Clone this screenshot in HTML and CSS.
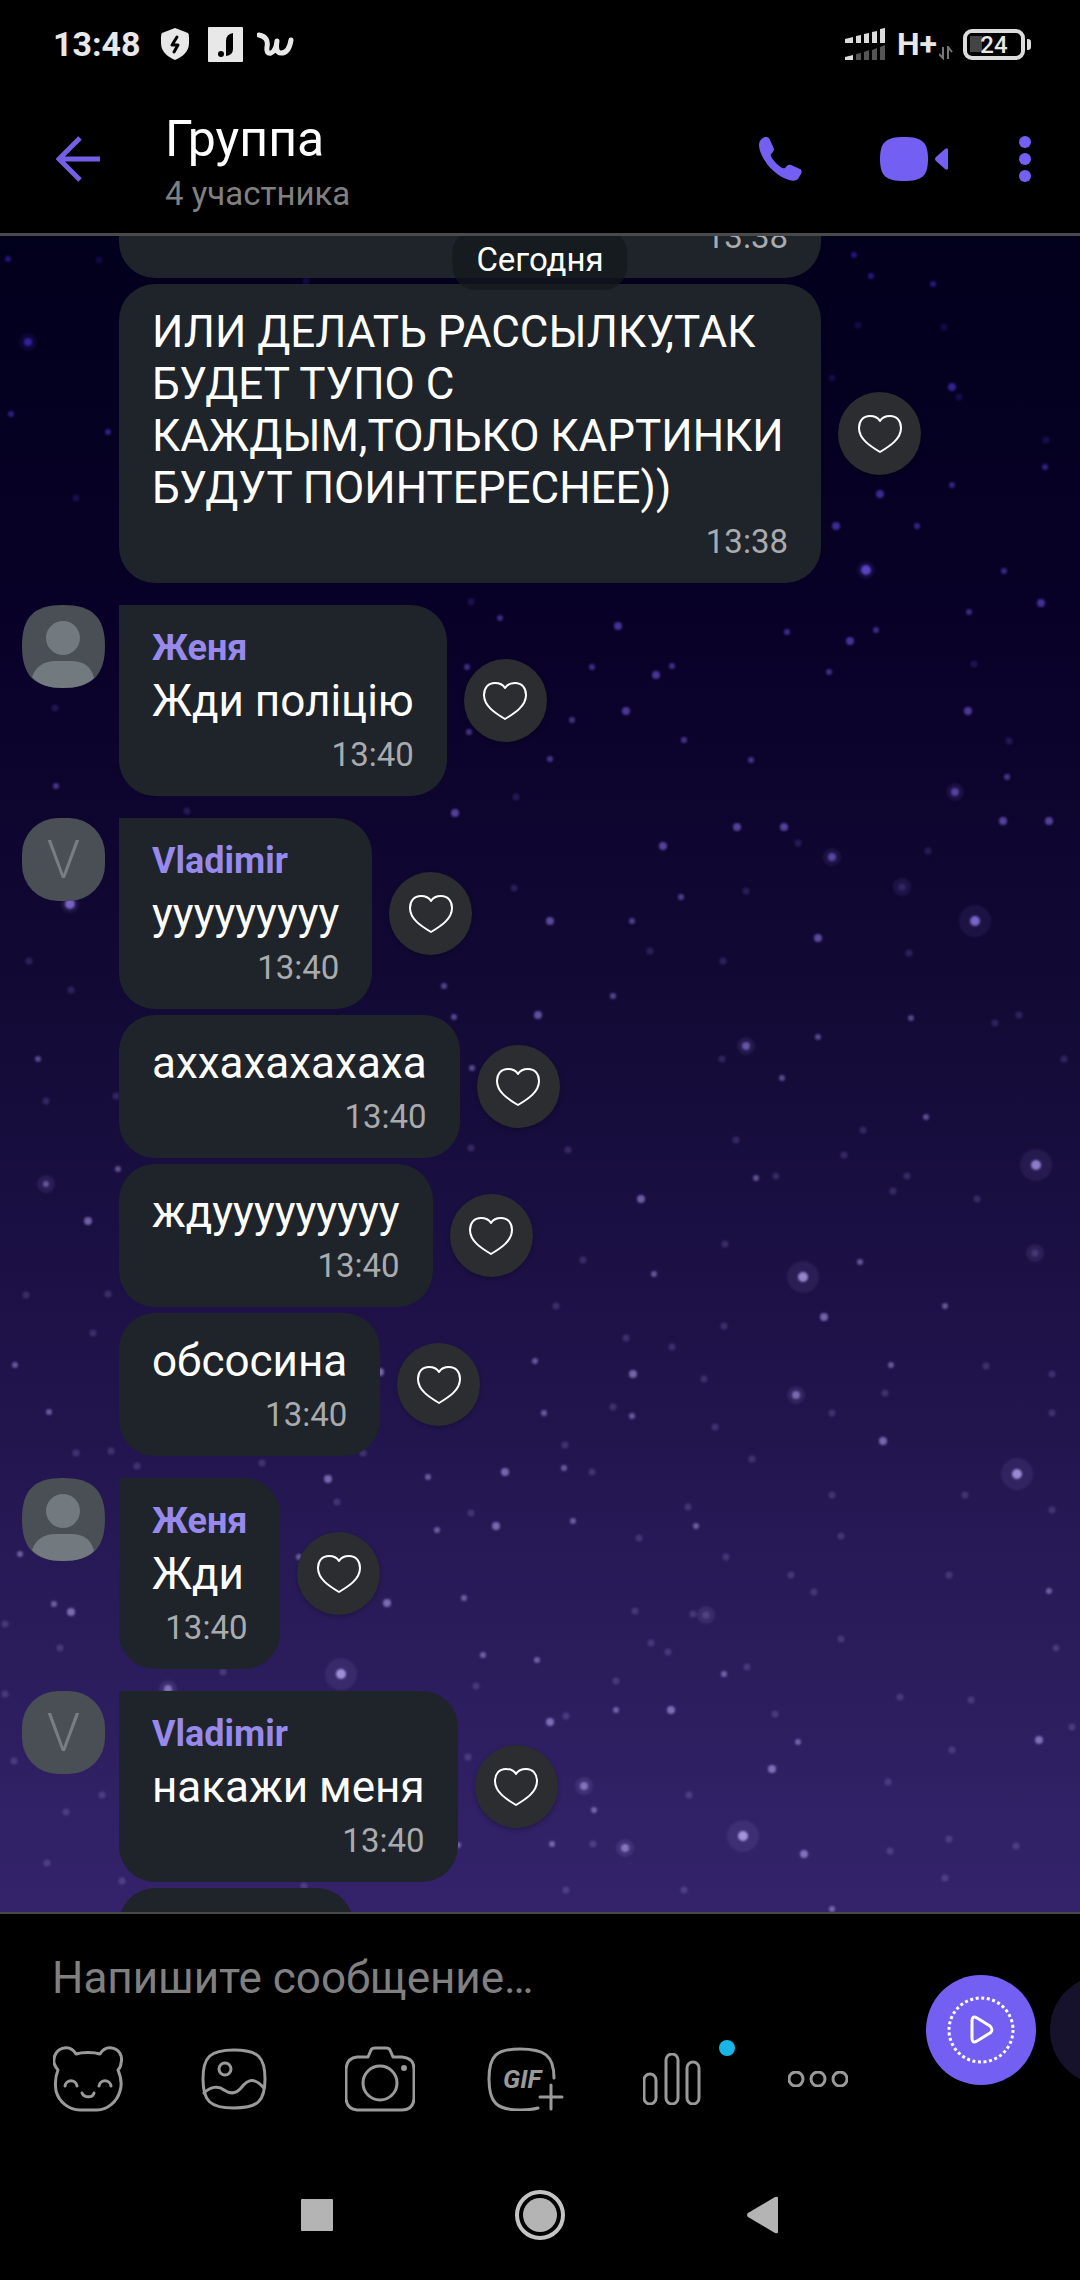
FILE: index.html
```html
<!DOCTYPE html>
<html lang="ru">
<head>
  <meta charset="UTF-8" />
  <meta name="viewport" content="width=device-width, initial-scale=1.0"/>
  <title>Группа</title>
  <link rel="stylesheet" href="styles.css">
</head>
<body>

  <!-- Общие иконки -->
  <svg class="sprite" aria-hidden="true">
    <symbol id="heart" viewBox="0 0 46 40">
      <path d="M23 7C20 2 16 2 13 2C6 2 2 7 2 14C2 25 13 32 23 38C33 32 44 25 44 14C44 7 40 2 33 2C30 2 26 2 23 7Z" fill="none" stroke="#fff" stroke-width="2" stroke-linejoin="round"/>
    </symbol>
    <symbol id="person" viewBox="0 0 83 83">
      <path d="M41 0C70 0 83 12 83 41C83 70 70 83 41 83C12 83 0 70 0 41C0 12 12 0 41 0Z" fill="#4a4e55"/>
      <circle cx="41" cy="33" r="17" fill="#727a7f"/>
      <path d="M10 72C14 61 22 56 34 56H49C61 56 69 61 72 73C65 80 54 83 41 83C28 83 17 80 10 72Z" fill="#727a7f"/>
    </symbol>
  </svg>

  <div class="status">
    <span class="clock">13:48</span>
    <svg class="shield" width="28" height="32" viewBox="0 0 28 32">
      <path d="M14 0L27 5Q28 6 28 9V15C28 24 21 29 14 32C7 29 0 24 0 15V9Q0 6 1 5Z" fill="#e8e8e8"/>
      <path d="M16 9L11 17H17L13 24" fill="none" stroke="#000" stroke-width="3" stroke-linejoin="round" stroke-linecap="round"/>
    </svg>
    <svg class="joom" width="35" height="35" viewBox="0 0 35 35">
      <rect width="35" height="35" rx="1" fill="#e8e8e8"/>
      <circle cx="13" cy="27" r="3" fill="#000"/>
      <path d="M18 29V14Q18 7 25 6V22Q25 28 18 29Z" fill="#000"/>
    </svg>
    <svg class="wish" width="37" height="26" viewBox="0 0 37 26">
      <path d="M2 4Q7 5 9 8Q11 11 10 16Q9 23 14 22Q19 20 20 10Q18 22 24 22Q32 22 34 9" fill="none" stroke="#e8e8e8" stroke-width="5" stroke-linecap="round" stroke-linejoin="round"/>
    </svg>

    <svg class="signal" width="40" height="32" viewBox="0 0 40 32">
      <path d="M0 11L8 9V15H0ZM11 8L16 7V15H11ZM19 6L24 5V15H19ZM27 4L32 3V15H27ZM35 1L40 0V15H35ZM0 29L8 27V32H0Z" fill="#dcdcdc"/>
      <path d="M11 26L16 25V32H11ZM19 24L24 22V32H19ZM27 22L32 20V32H27ZM35 19L40 17V32H35Z" fill="#555"/>
    </svg>
    <span class="network">H+</span>
    <svg class="arrows" width="14" height="14" viewBox="0 0 14 14">
      <path d="M4 1V12L0 8M9 13V1L13 6" fill="none" stroke="#777" stroke-width="2"/>
    </svg>
    <div class="battery"><span>24</span></div>
  </div>

  <header class="header">
    <button class="icon-btn back" aria-label="Назад">
      <svg width="45" height="46" viewBox="0 0 45 46">
        <path d="M44 23H4M24 2L3 23L24 44" fill="none" stroke="#7360e4" stroke-width="5"/>
      </svg>
    </button>
    <div class="title">
      <h1>Группа</h1>
      <p>4 участника</p>
    </div>
    <button class="icon-btn phone" aria-label="Позвонить">
      <svg width="43" height="44" viewBox="0 0 43 44">
        <path d="M4 1C7 -1 10 0 11 3L15 12C15 14 14 15 12 17C11 19 13 22 17 26C21 30 24 32 26 31C28 28 30 27 32 28L41 32C43 33 43 35 42 37L39 42C37 44 34 44 30 43C23 41 14 35 8 27C3 20 0 13 0 8C0 4 2 2 4 1Z" fill="#7360f2"/>
      </svg>
    </button>
    <button class="icon-btn video" aria-label="Видеозвонок">
      <svg width="68" height="44" viewBox="0 0 68 44">
        <path d="M24 0C42 0 48 5 48 22C48 39 42 44 24 44C6 44 0 39 0 22C0 5 6 0 24 0Z" fill="#7360f2"/>
        <path d="M56 20L65 12Q68 10 68 13V31Q68 34 65 32L56 24Q54 22 56 20Z" fill="#7360f2"/>
      </svg>
    </button>
    <button class="icon-btn more" aria-label="Меню">
      <svg width="12" height="46" viewBox="0 0 12 46">
        <g fill="#7360f2"><circle cx="6" cy="6" r="6"/><circle cx="6" cy="23" r="6"/><circle cx="6" cy="40" r="6"/></g>
      </svg>
    </button>
  </header>

  <main class="chat">
    <!-- Звёздное небо -->
    <svg class="sky" viewBox="0 236 1080 1676" preserveAspectRatio="xMidYMid slice" aria-hidden="true">
      <defs>
        <linearGradient id="starColor" gradientUnits="userSpaceOnUse" x1="0" y1="236" x2="0" y2="1912">
          <stop offset="0" stop-color="#3a22c0"/>
          <stop offset="0.3" stop-color="#6a52c4"/>
          <stop offset="0.6" stop-color="#9484cc"/>
          <stop offset="1" stop-color="#a596e0"/>
        </linearGradient>
      </defs>
      <g class="stars">
        <path class="halo-big" d="M975 921h0M1036 1165h0M803 1277h0M1017 1474h0M743 1836h0M341 1674h0"/>
        <path class="halo" d="M955 792h0M832 857h0M746 1046h0M796 1395h0M706 1615h0M584 1786h0M625 1848h0M866 570h0M28 342h0M70 904h0M46 1184h0M168 1689h0M902 887h0M1035 1253h0"/>
        <path class="bright" d="M975 921h0M1036 1165h0M803 1277h0M1017 1474h0M743 1836h0M341 1674h0M866 570h0M70 904h0"/>
        <path class="medium" d="M626 711h0M968 711h0M955 792h0M1003 821h0M1049 821h0M737 827h0M784 827h0M832 857h0M663 846h0M550 921h0M818 938h0M746 1046h0M641 1199h0M824 1317h0M633 1374h0M796 1395h0M883 1441h0M671 1710h0M550 1722h0M1039 1740h0M772 1769h0M584 1786h0M625 1848h0M804 1854h0M952 387h0M880 494h0M836 526h0M1041 603h0M618 626h0M850 641h0M656 675h0M28 342h0M538 1015h0M88 1221h0M328 1479h0M505 1472h0M496 1526h0M71 1612h0M387 1603h0M168 1689h0M455 813h0M380 1372h0"/>
        <path class="small" d="M572 720h0M550 759h0M684 740h0M751 760h0M1007 777h0M681 897h0M632 921h0M613 996h0M818 1037h0M911 1018h0M782 1078h0M926 1117h0M756 1178h0M654 1274h0M860 1262h0M945 1306h0M891 1365h0M544 1413h0M632 1416h0M564 1468h0M696 1526h0M573 1521h0M1049 1591h0M724 1674h0M616 1710h0M798 1742h0M594 1810h0M552 1844h0M832 1909h0M1045 467h0M952 485h0M917 526h0M1004 571h0M969 612h0M787 632h0M876 630h0M592 667h0M672 666h0M829 672h0M933 284h0M854 255h0M871 276h0M8 259h0M11 414h0M108 432h0M500 618h0M467 667h0M469 732h0M56 786h0M444 986h0M454 1017h0M38 1059h0M472 1068h0M46 1184h0M118 1169h0M15 1365h0M49 1412h0M535 1361h0M428 1477h0M437 1530h0M20 1554h0M54 1604h0M464 1598h0M299 1557h0M483 1655h0M537 1660h0M458 1845h0"/>
        <path class="faint" d="M1009 741h0M798 843h0M928 851h0M902 887h0M746 891h0M650 951h0M723 961h0M909 953h0M722 1059h0M1064 1059h0M995 1023h0M1019 1015h0M863 1130h0M844 1155h0M736 1140h0M568 1150h0M776 1176h0M907 1176h0M893 1191h0M977 1199h0M725 1244h0M1035 1253h0M583 1260h0M556 1306h0M724 1326h0M626 1338h0M672 1347h0M704 1379h0M885 1393h0M986 1366h0M1052 1374h0M1052 1413h0M832 1413h0M613 1407h0M715 1427h0M565 1445h0M592 1472h0M752 1459h0M832 1495h0M965 1495h0M688 1507h0M639 1538h0M726 1557h0M841 1536h0M1052 1510h0M791 1575h0M814 1592h0M949 1575h0M635 1611h0M693 1614h0M706 1615h0M651 1643h0M668 1652h0M841 1639h0M1056 1648h0M747 1667h0M616 1681h0M566 1716h0M775 1714h0M900 1697h0M971 1700h0M1072 1727h0M952 1750h0M888 1782h0M689 1795h0M593 1844h0M890 1851h0M949 1839h0M1016 1846h0M945 1878h0M566 1890h0M684 1890h0"/>
        <path class="faint" d="M858 325h0M944 327h0M832 378h0M959 397h0M1046 440h0M974 664h0M99 260h0M306 281h0M76 498h0M471 602h0M55 708h0M187 811h0M516 797h0M514 888h0M471 1148h0M46 1101h0M116 1096h0M29 961h0M71 990h0M108 1294h0M26 1295h0M111 1451h0M76 1453h0M137 1466h0M93 1333h0M363 1453h0M262 1463h0M471 1513h0M337 1502h0M5 1624h0M60 1648h0M223 1672h0M476 1686h0M14 1761h0M102 1795h0M66 1812h0M47 1863h0M122 1881h0M468 1757h0M304 1886h0M5 1694h0"/>
      </g>
    </svg>

    <div class="date">Сегодня</div>

    <div class="messages">
      <div class="group">
        <div class="row">
          <div class="bubble wide"><time>13:38</time></div>
        </div>
        <div class="row">
          <div class="bubble">
            <p>ИЛИ ДЕЛАТЬ РАССЫЛКУ,ТАК БУДЕТ ТУПО С КАЖДЫМ,ТОЛЬКО КАРТИНКИ БУДУТ ПОИНТЕРЕСНЕЕ))</p>
            <time>13:38</time>
          </div>
          <button class="like" aria-label="Нравится"><svg><use href="#heart"/></svg></button>
        </div>
      </div>

      <div class="group">
        <svg class="avatar"><use href="#person"/></svg>
        <div class="row">
          <div class="bubble first">
            <h2>Женя</h2>
            <p>Жди поліцію</p>
            <time>13:40</time>
          </div>
          <button class="like" aria-label="Нравится"><svg><use href="#heart"/></svg></button>
        </div>
      </div>

      <div class="group">
        <div class="avatar letter">V</div>
        <div class="row">
          <div class="bubble first">
            <h2>Vladimir</h2>
            <p>ууууууууу</p>
            <time>13:40</time>
          </div>
          <button class="like" aria-label="Нравится"><svg><use href="#heart"/></svg></button>
        </div>
        <div class="row">
          <div class="bubble">
            <p>аххахахахаха</p>
            <time>13:40</time>
          </div>
          <button class="like" aria-label="Нравится"><svg><use href="#heart"/></svg></button>
        </div>
        <div class="row">
          <div class="bubble">
            <p>ждууууууууу</p>
            <time>13:40</time>
          </div>
          <button class="like" aria-label="Нравится"><svg><use href="#heart"/></svg></button>
        </div>
        <div class="row">
          <div class="bubble">
            <p>обсосина</p>
            <time>13:40</time>
          </div>
          <button class="like" aria-label="Нравится"><svg><use href="#heart"/></svg></button>
        </div>
      </div>

      <div class="group">
        <svg class="avatar"><use href="#person"/></svg>
        <div class="row">
          <div class="bubble first">
            <h2>Женя</h2>
            <p>Жди</p>
            <time>13:40</time>
          </div>
          <button class="like" aria-label="Нравится"><svg><use href="#heart"/></svg></button>
        </div>
      </div>

      <div class="group">
        <div class="avatar letter">V</div>
        <div class="row">
          <div class="bubble first">
            <h2>Vladimir</h2>
            <p>накажи меня</p>
            <time>13:40</time>
          </div>
          <button class="like" aria-label="Нравится"><svg><use href="#heart"/></svg></button>
        </div>
        <div class="row">
          <div class="bubble next"></div>
        </div>
      </div>
    </div>
  </main>

  <form class="composer">
    <div class="composer-main">
      <input type="text" aria-label="Сообщение" placeholder="Напишите сообщение…">
      <div class="tools">
        <button type="button" aria-label="Стикеры">
          <svg width="70" height="66" viewBox="0 0 70 66">
            <path d="M23 8C29 6 41 6 47 8C50 3 54 1 59 2C66 3 70 10 68 17C68 20 67 22 65 24C68 31 69 39 67 45C64 56 54 64 44 64H27C16 64 6 56 3 45C2 38 2 31 5 24C3 22 2 20 1 17C0 10 4 3 11 2C16 1 20 3 23 8Z"/>
            <path d="M12 40C13 33 23 33 24 40M46 40C47 33 57 33 58 40M29 47C31 52 40 52 41 47"/>
          </svg>
        </button>
        <button type="button" aria-label="Галерея">
          <svg width="66" height="62" viewBox="0 0 66 62">
            <path d="M33 2C57 2 64 9 64 31C64 53 57 60 33 60C9 60 2 53 2 31C2 9 9 2 33 2Z"/>
            <circle cx="24" cy="21" r="6"/>
            <path d="M3 45C9 39 17 37 23 42C29 46 35 46 40 40C47 31 53 29 63 40"/>
          </svg>
        </button>
        <button type="button" aria-label="Камера">
          <svg width="70" height="66" viewBox="0 0 70 66">
            <path d="M12 11H23L26 4Q27 2 30 2H41Q44 2 45 4L48 11H57Q69 12 69 23V53Q68 64 57 64H12Q2 63 1 53V23Q2 12 12 11Z"/>
            <circle cx="35" cy="37" r="17"/>
            <circle class="dot" cx="59" cy="22" r="3"/>
          </svg>
        </button>
        <button type="button" aria-label="GIF" class="gif">
          <svg width="78" height="64" viewBox="0 0 78 64">
            <path d="M51 61Q44 63 33 63C9 63 2 55 2 32C2 9 9 2 33 2C57 2 67 8 67 31M64 38V62M53 50H75"/>
          </svg>
          <span>GIF</span>
        </button>
        <button type="button" aria-label="Опрос" class="poll">
          <svg width="58" height="52" viewBox="0 0 58 52">
            <rect x="1" y="21" width="12" height="30" rx="6"/>
            <rect x="23" y="1" width="12" height="50" rx="6"/>
            <rect x="44" y="9" width="12" height="42" rx="6"/>
          </svg>
          <i class="badge"></i>
        </button>
        <button type="button" aria-label="Ещё">
          <svg width="60" height="16" viewBox="0 0 60 16">
            <circle cx="8" cy="8" r="7"/><circle cx="30" cy="8" r="7"/><circle cx="52" cy="8" r="7"/>
          </svg>
        </button>
      </div>
    </div>
    <div class="recorders">
      <button type="button" class="rec" aria-label="Видеосообщение">
        <svg width="110" height="110" viewBox="0 0 110 110" fill="none" stroke="#fff">
          <circle cx="55" cy="55" r="32" stroke-width="3" stroke-dasharray="3 2.585"/>
          <path d="M46 46Q46 40 51 43L64 51Q68 55 64 58L51 66Q46 69 46 63Z" stroke-width="3" stroke-linejoin="round"/>
        </svg>
      </button>
      <button type="button" class="rec dim" aria-label="Голосовое сообщение"></button>
    </div>
  </form>

  <nav class="nav">
    <button aria-label="Недавние"><svg width="32" height="32"><rect width="32" height="32" rx="1" fill="#b4b4b4"/></svg></button>
    <button aria-label="Домой">
      <svg width="50" height="50"><circle cx="25" cy="25" r="17" fill="#b4b4b4"/><circle cx="25" cy="25" r="23" fill="none" stroke="#c4c4c4" stroke-width="4"/></svg>
    </button>
    <button aria-label="Назад"><svg width="32" height="38"><path d="M1 17L28 1Q31 0 31 2V36Q31 38 28 37L1 21Q-1 19 1 17Z" fill="#b4b4b4"/></svg></button>
  </nav>

</body>
</html>
```

FILE: styles.css
```css
* {
  box-sizing: border-box;
}

body {
  margin: 0;
  height: 100vh;
  display: flex;
  flex-direction: column;
  overflow: hidden;
  background: #000;
  color: #fff;
  font-family: Roboto, "Noto Sans", sans-serif;
}

h1, h2, p {
  margin: 0;
  font-weight: 400;
}

button {
  display: flex;
  align-items: center;
  justify-content: center;
  padding: 0;
  border: none;
  background: none;
  color: inherit;
  font-family: inherit;
  cursor: pointer;
}

svg {
  display: block;
  flex: none;
}

.sprite {
  position: absolute;
  width: 0;
  height: 0;
}

/* status bar */
.status {
  display: flex;
  align-items: center;
  flex: none;
  height: 88px;
  padding: 0 55px 0 53px;
  color: #e8e8e8;
}

.clock {
  font-size: 34px;
  font-weight: 700;
  line-height: 40px;
}

.shield {
  margin-left: 20px;
}

.joom {
  margin-left: 19px;
}

.wish {
  margin-left: 14px;
}

.signal {
  margin-left: auto;
}

.network {
  margin-left: 12px;
  font-size: 32px;
  font-weight: 700;
  line-height: 40px;
}

.arrows {
  margin: 18px 10px 0 2px;
}

.battery {
  position: relative;
  width: 62px;
  height: 31px;
  border: 4px solid #dcdcdc;
  border-radius: 9px;
  background: linear-gradient(#444, #444) 3px 50% / 12px 16px no-repeat;
  font-size: 24px;
  font-weight: 500;
  line-height: 24px;
  text-align: center;
}

.battery::after {
  content: "";
  position: absolute;
  top: 6px;
  right: -10px;
  width: 4px;
  height: 11px;
  border-radius: 0 3px 3px 0;
  background: #dcdcdc;
}

/* header */
.header {
  display: flex;
  align-items: center;
  flex: none;
  height: 148px;
  padding: 0 49px 3px 56px;
  border-bottom: 3px solid #4a4a4d;
}

.title {
  flex: 1;
  margin-left: 64px;
  padding-top: 4px;
}

.title h1 {
  font-size: 50px;
  line-height: 58px;
}

.title p {
  margin-top: 6px;
  color: #808080;
  font-size: 33px;
  line-height: 39px;
}

.video {
  margin-left: 78px;
}

.more {
  margin-left: 71px;
}

/* chat */
.chat {
  position: relative;
  flex: 1;
  min-height: 0;
  overflow: hidden;
  background: linear-gradient(#01001c 0%, #090128 24%, #120a35 45%, #1d1147 64%, #291b59 82%, #34236b 100%);
}

.sky {
  position: absolute;
  top: 0;
  left: 0;
  width: 100%;
  height: 100%;
}

.stars {
  fill: none;
  stroke: url(#starColor);
  stroke-linecap: round;
  filter: blur(1px);
}

.halo-big {
  stroke-width: 32px;
  opacity: 0.12;
}

.halo {
  stroke-width: 18px;
  opacity: 0.14;
}

.bright {
  stroke-width: 10px;
}

.medium {
  stroke-width: 8px;
  opacity: 0.7;
}

.small {
  stroke-width: 6px;
  opacity: 0.6;
}

.faint {
  stroke-width: 7px;
  opacity: 0.25;
}

.date {
  position: absolute;
  z-index: 2;
  top: -7px;
  left: 50%;
  transform: translateX(-50%);
  padding: 11px 24px;
  border-radius: 24px;
  background: rgba(20, 24, 30, 0.75);
  font-size: 33px;
  line-height: 39px;
}

.messages {
  position: relative;
  display: flex;
  flex-direction: column;
  gap: 22px;
  margin-top: -41px;
}

.group {
  position: relative;
  display: flex;
  flex-direction: column;
  gap: 6px;
  padding-left: 119px;
}

.avatar {
  position: absolute;
  top: 0;
  left: 22px;
  width: 83px;
  height: 83px;
}

.letter {
  border-radius: 36px;
  background: #4a4e55;
  color: #767e82;
  font-size: 54px;
  font-weight: 300;
  line-height: 83px;
  text-align: center;
}

.row {
  display: flex;
  align-items: center;
  gap: 17px;
}

.bubble {
  max-width: 702px;
  padding: 22px 33px;
  border-radius: 36px;
  background: #1f242a;
}

.bubble.first {
  border-top-left-radius: 0;
}

.bubble.wide {
  width: 702px;
}

.bubble.next {
  width: 234px;
  height: 143px;
}

.bubble h2 {
  margin-bottom: 6px;
  color: #9889ec;
  font-size: 36px;
  font-weight: 700;
  line-height: 42px;
}

.bubble p {
  margin-bottom: 8px;
  font-size: 44px;
  line-height: 52px;
}

.bubble time {
  display: block;
  color: #a9abae;
  font-size: 33px;
  line-height: 39px;
  text-align: right;
}

.like {
  flex: none;
  width: 83px;
  height: 83px;
  border-radius: 50%;
  background: #2b2d30;
  box-shadow: 0 2px 4px rgba(0, 0, 0, 0.25);
}

.like svg {
  width: 46px;
  height: 40px;
}

/* composer */
.composer {
  display: grid;
  grid-template-columns: 1fr 154px;
  flex: none;
  border-top: 2px solid #4a4a4d;
}

.composer-main {
  padding: 38px 35px 31px 15px;
}

.composer input {
  display: block;
  width: 100%;
  height: 52px;
  padding: 0 0 0 37px;
  border: none;
  outline: none;
  background: none;
  color: #fff;
  font-family: inherit;
  font-size: 44px;
  line-height: 52px;
}

.composer input::placeholder {
  color: #808080;
  opacity: 1;
}

.tools {
  display: flex;
  margin-top: 35px;
}

.tools button {
  position: relative;
  flex: 1;
  height: 80px;
}

.tools svg {
  fill: none;
  stroke: #9a9a9a;
  stroke-width: 3px;
  stroke-linecap: round;
  stroke-linejoin: round;
}

.tools .dot {
  fill: #9a9a9a;
  stroke: none;
}

.gif span {
  position: absolute;
  top: 50%;
  left: 50%;
  transform: translate(-60%, -50%);
  color: #9a9a9a;
  font-size: 26px;
  font-style: italic;
  font-weight: 700;
}

.badge {
  position: absolute;
  top: 1px;
  right: 10px;
  width: 16px;
  height: 16px;
  border-radius: 50%;
  background: #19b5e6;
}

.recorders {
  display: flex;
  gap: 14px;
  padding-top: 61px;
  overflow: hidden;
}

.rec {
  flex: none;
  width: 110px;
  height: 110px;
  border-radius: 50%;
  background: #7360f2;
}

.rec.dim {
  background: #17122b;
}

/* navigation */
.nav {
  display: flex;
  align-items: center;
  justify-content: center;
  flex: none;
  height: 130px;
}

.nav button {
  width: 223px;
  height: 100%;
}
```
